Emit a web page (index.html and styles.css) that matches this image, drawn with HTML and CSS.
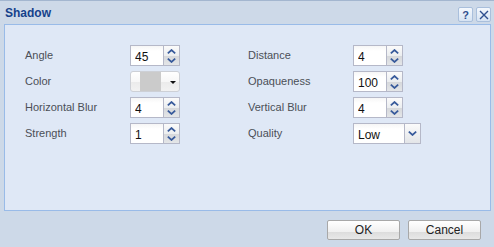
FILE: index.html
```html
<!DOCTYPE html>
<html lang="en">
<head>
    <meta charset="UTF-8">
    <title>Shadow</title>
    <link rel="stylesheet" href="styles.css">
</head>
<body>
    <div class="window">
        <div class="header">
            <span class="title">Shadow</span>
            <div class="tools">
                <span class="tool tool-help">?</span>
                <span class="tool tool-close">
                    <svg width="10" height="10" viewBox="0 0 10 10"><path d="M1 1L9 9M9 1L1 9" stroke="#2f4f8f" stroke-width="1.4" fill="none"/></svg>
                </span>
            </div>
        </div>

        <div class="panel">
            <div class="form">
                <label>Angle</label>
                <div class="spinner"><input type="text" value="45"><span class="spin-btn"><i class="up"></i><i class="down"></i></span></div>
                <label>Distance</label>
                <div class="spinner"><input type="text" value="4"><span class="spin-btn"><i class="up"></i><i class="down"></i></span></div>

                <label>Color</label>
                <div class="color-btn"><span class="swatch"></span><span class="caret"></span></div>
                <label>Opaqueness</label>
                <div class="spinner"><input type="text" value="100"><span class="spin-btn"><i class="up"></i><i class="down"></i></span></div>

                <label>Horizontal Blur</label>
                <div class="spinner"><input type="text" value="4"><span class="spin-btn"><i class="up"></i><i class="down"></i></span></div>
                <label>Vertical Blur</label>
                <div class="spinner"><input type="text" value="4"><span class="spin-btn"><i class="up"></i><i class="down"></i></span></div>

                <label>Strength</label>
                <div class="spinner"><input type="text" value="1"><span class="spin-btn"><i class="up"></i><i class="down"></i></span></div>
                <label>Quality</label>
                <div class="combo"><input type="text" value="Low"><span class="trigger"><i class="down"></i></span></div>
            </div>
        </div>

        <div class="footer">
            <button>OK</button>
            <button>Cancel</button>
        </div>
    </div>
</body>
</html>
```

FILE: styles.css
```css
html, body {
    margin: 0;
    padding: 0;
    height: 100%;
}
body {
    font-family: "Liberation Sans", Arial, sans-serif;
    font-size: 11px;
    background-color: #cdd9e8;
}
.window {
    height: 246px;
    border-top: 1px solid #a3b6cf;
    display: flex;
    flex-direction: column;
}
.header {
    height: 23px;
    display: flex;
    align-items: center;
    justify-content: space-between;
    padding: 0 3px 0 5px;
}
.title {
    color: #15428b;
    font-weight: bold;
    font-size: 12px;
    margin-top: 1px;
}
.tools {
    display: flex;
    gap: 3px;
    margin-top: 4px;
}
.tool {
    width: 13px;
    height: 13px;
    border: 1px solid #a9bfdc;
    border-radius: 2px;
    background: linear-gradient(#f4f8fd, #d6e3f3);
    display: flex;
    align-items: center;
    justify-content: center;
    color: #2f4f8f;
    font-weight: bold;
    font-size: 11px;
}
.panel {
    margin: 0 3px 0 4px;
    height: 185px;
    border: 1px solid #99bbe8;
    background-color: #dfe8f6;
}
.form {
    display: grid;
    grid-template-columns: 105px 118px 105px auto;
    grid-auto-rows: 21px;
    row-gap: 5px;
    padding: 20px 0 0 20px;
    align-items: center;
}
.form label {
    color: #4b4f57;
    font-size: 11px;
    margin-top: -2px;
}
.spinner, .combo {
    display: flex;
    height: 21px;
    box-sizing: border-box;
}
.spinner {
    width: 50px;
}
.combo {
    width: 68px;
}
.spinner input, .combo input {
    box-sizing: border-box;
    height: 21px;
    border: 1px solid #b5b8c8;
    border-right: none;
    background: linear-gradient(#f6f6f6, #fff 5px);
    font-family: "Liberation Sans", Arial, sans-serif;
    font-size: 12px;
    color: #111;
    padding: 3px 0 0 4px;
    margin: 0;
    outline: none;
}
.spinner input {
    width: 33px;
}
.combo input {
    width: 51px;
}
.spin-btn, .trigger {
    box-sizing: border-box;
    width: 17px;
    height: 21px;
    border: 1px solid #b5b8c8;
    display: flex;
    flex-direction: column;
    align-items: center;
    justify-content: center;
}
.spin-btn {
    background: linear-gradient(#fbfbfb 0, #eceef0 50%, #d5d7da 51%, #e4e6e8 100%);
}
.trigger {
    background: linear-gradient(#fbfbfb, #e3e5e8);
}
.spin-btn i, .trigger i {
    display: block;
    width: 9px;
    height: 5px;
    margin: 2px 0;
}
.up {
    background: no-repeat center/9px 5px url("data:image/svg+xml,%3Csvg xmlns='http://www.w3.org/2000/svg' width='9' height='5'%3E%3Cpath d='M0.8 4.4L4.5 1L8.2 4.4' stroke='%23375a9b' stroke-width='1.7' fill='none'/%3E%3C/svg%3E");
}
.down {
    background: no-repeat center/9px 5px url("data:image/svg+xml,%3Csvg xmlns='http://www.w3.org/2000/svg' width='9' height='5'%3E%3Cpath d='M0.8 0.6L4.5 4L8.2 0.6' stroke='%23375a9b' stroke-width='1.7' fill='none'/%3E%3C/svg%3E");
}
.color-btn {
    box-sizing: border-box;
    width: 50px;
    height: 21px;
    border: 1px solid #cdd0d6;
    border-radius: 3px;
    background: linear-gradient(#ffffff, #f7f7f7 50%, #ebebeb 51%, #f2f2f2);
    display: flex;
    align-items: center;
    padding-left: 9px;
}
.swatch {
    width: 21px;
    height: 19px;
    background-color: #cbcbcb;
}
.caret {
    width: 0;
    height: 0;
    margin-left: 9px;
    margin-top: 2px;
    border-left: 3px solid transparent;
    border-right: 3px solid transparent;
    border-top: 3px solid #111;
}
.footer {
    flex: 1;
    display: flex;
    justify-content: flex-end;
    align-items: flex-start;
    gap: 8px;
    padding: 9px 13px 0 0;
}
.footer button {
    width: 73px;
    height: 20px;
    border: 1px solid #a8a8a8;
    border-radius: 2px;
    background: linear-gradient(#ffffff 0, #f0f0f0 60%, #dcdcdc 61%, #e8e8e8 100%);
    font-family: "Liberation Sans", Arial, sans-serif;
    font-size: 12px;
    color: #222;
    padding: 0;
}
```
